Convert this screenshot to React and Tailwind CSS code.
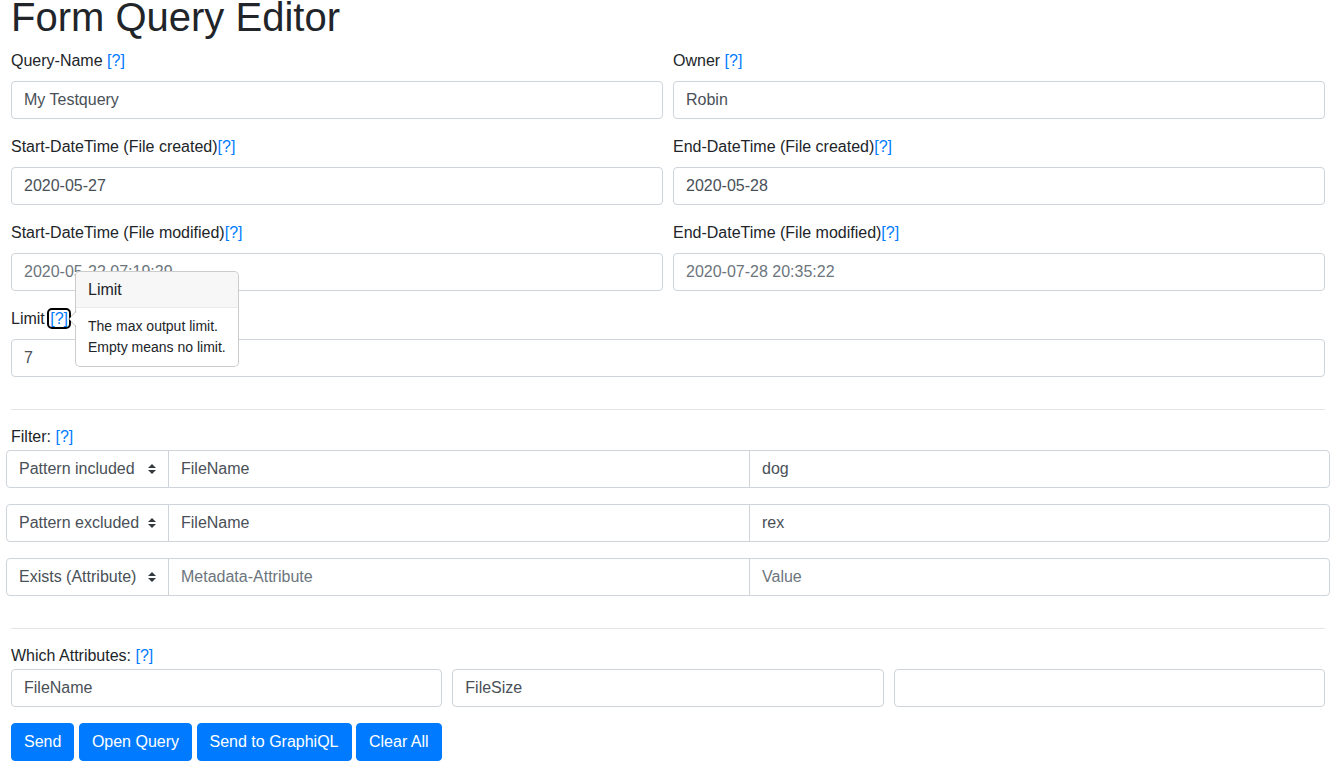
import React from 'react';

const FONT = { fontFamily: '"Liberation Sans", Arial, sans-serif' };

function Help({ focused }) {
  return (
    <a
      href="#"
      onClick={(e) => e.preventDefault()}
      className={
        'text-[#007bff] no-underline ' +
        (focused ? 'rounded-[3px] outline-2 outline-black outline-offset-0 px-px' : '')
      }
    >
      [?]
    </a>
  );
}

function Label({ children, className = '' }) {
  return <div className={'h-6 leading-6 text-base text-[#212529] ' + className}>{children}</div>;
}

function TextInput({ value, placeholder, className = '' }) {
  return (
    <input
      readOnly
      value={value || ''}
      placeholder={placeholder}
      className={
        'block w-full h-[38px] px-3 py-1.5 text-base leading-6 text-[#495057] bg-white border border-[#ced4da] rounded placeholder:text-[#6c757d] outline-none ' +
        className
      }
    />
  );
}

function Field({ label, help, value, placeholder }) {
  return (
    <div className="mb-4">
      <Label className="mb-2">
        {label}
        {help}
      </Label>
      <TextInput value={value} placeholder={placeholder} />
    </div>
  );
}

function SelectArrows() {
  return (
    <svg width="8" height="10" viewBox="0 0 4 5" className="shrink-0">
      <path fill="#343a40" d="M2 0L0 2h4zm0 5L0 3h4z" />
    </svg>
  );
}

function FilterRow({ op, name, value, namePh, valuePh }) {
  return (
    <div className="flex h-[38px] -mx-[5px] mb-4">
      <div className="w-[163px] shrink-0 flex items-center justify-between pl-3 pr-[12px] border border-[#ced4da] rounded-l text-base text-[#495057] bg-white">
        <span>{op}</span>
        <SelectArrows />
      </div>
      <input
        readOnly
        value={name || ''}
        placeholder={namePh}
        className="-ml-px w-[582px] shrink-0 h-[38px] px-3 text-base text-[#495057] border border-[#ced4da] placeholder:text-[#6c757d] outline-none"
      />
      <input
        readOnly
        value={value || ''}
        placeholder={valuePh}
        className="-ml-px flex-1 min-w-0 h-[38px] px-3 text-base text-[#495057] border border-[#ced4da] rounded-r placeholder:text-[#6c757d] outline-none"
      />
    </div>
  );
}

function Popover() {
  return (
    <div className="absolute left-[64px] -top-[36px] bg-white border border-[rgba(0,0,0,0.2)] rounded-[5px] text-sm whitespace-nowrap z-10">
      <div className="absolute -left-[8px] top-[39px] w-0 h-0 border-y-[8px] border-y-transparent border-r-[8px] border-r-[rgba(0,0,0,0.25)]" />
      <div className="absolute -left-[7px] top-[39px] w-0 h-0 border-y-[8px] border-y-transparent border-r-[8px] border-r-white" />
      <div className="px-3 py-2 h-[36px] text-base leading-5 text-[#212529] bg-[#f7f7f7] border-b border-[#ebebeb] rounded-t-[5px]">
        Limit
      </div>
      <div className="px-3 py-2 leading-[21px] text-[#212529]">
        The max output limit.
        <br />
        Empty means no limit.
      </div>
    </div>
  );
}

export default function App() {
  return (
    <div className="min-h-screen flex flex-col bg-white pl-[11px] pr-[15px] pb-4" style={FONT}>
      <h1 className="-mt-[7px] mb-2 text-[40px] leading-[48px] font-normal text-[#212529]">Form Query Editor</h1>

      <div className="grid grid-cols-2 gap-x-[10px]">
        <Field label="Query-Name " help={<Help />} value="My Testquery" />
        <Field label="Owner " help={<Help />} value="Robin" />
        <Field label="Start-DateTime (File created)" help={<Help />} value="2020-05-27" />
        <Field label="End-DateTime (File created)" help={<Help />} value="2020-05-28" />
        <Field label="Start-DateTime (File modified)" help={<Help />} placeholder="2020-05-22 07:19:29" />
        <Field label="End-DateTime (File modified)" help={<Help />} placeholder="2020-07-28 20:35:22" />
      </div>

      <div className="relative">
        <Field label="Limit " help={<Help focused />} value="7" />
        <Popover />
      </div>

      <hr className="mt-4 mb-[15px] border-0 border-t border-[rgba(0,0,0,0.1)]" />

      <Label className="mb-px">
        Filter: <Help />
      </Label>
      <FilterRow op="Pattern included" name="FileName" value="dog" />
      <FilterRow op="Pattern excluded" name="FileName" value="rex" />
      <FilterRow op="Exists (Attribute)" namePh="Metadata-Attribute" valuePh="Value" />

      <hr className="mt-4 mb-[15px] border-0 border-t border-[rgba(0,0,0,0.1)]" />

      <Label className="mb-px">
        Which Attributes: <Help />
      </Label>
      <div className="grid grid-cols-3 gap-x-[10px]">
        <TextInput value="FileName" />
        <TextInput value="FileSize" />
        <TextInput />
      </div>

      <div className="flex gap-[4.5px] mt-4">
        {['Send', 'Open Query', 'Send to GraphiQL', 'Clear All'].map((b) => (
          <button
            key={b}
            className="h-[38px] px-3 text-base leading-6 text-white bg-[#007bff] border border-[#007bff] rounded"
          >
            {b}
          </button>
        ))}
      </div>
    </div>
  );
}
